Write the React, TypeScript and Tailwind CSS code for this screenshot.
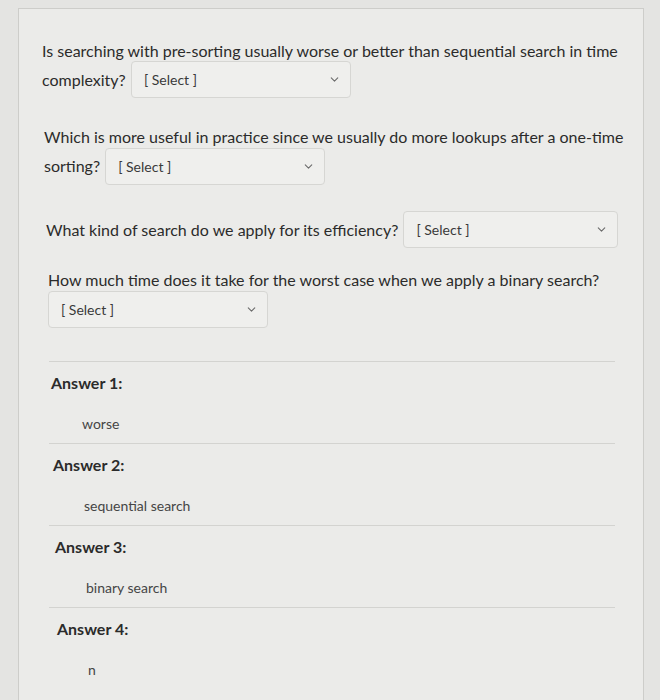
import { ChevronDown } from 'lucide-react';

type Question = {
  text: string;
  tail: string;
  gap: string;
};

const questions: Question[] = [
  {
    text: 'Is searching with pre-sorting usually worse or better than sequential search in time',
    tail: 'complexity?',
    gap: 'mt-0 pl-0',
  },
  {
    text: 'Which is more useful in practice since we usually do more lookups after a one-time',
    tail: 'sorting?',
    gap: 'mt-[28px] pl-[2px]',
  },
];

const answers = [
  { label: 'Answer 1:', value: 'worse' },
  { label: 'Answer 2:', value: 'sequential search' },
  { label: 'Answer 3:', value: 'binary search' },
  { label: 'Answer 4:', value: 'n' },
];

function SelectBox({ width = 'w-[220px]', className = '' }: { width?: string; className?: string }) {
  return (
    <span
      className={`inline-flex h-[37px] ${width} -mb-[4px] -mt-[8px] items-center justify-between rounded-[4px] border border-[#d6d6d3] bg-[#efefed] pl-[12px] pr-[9px] align-middle text-[14px] text-[#3a3a3a] ${className}`}
    >
      <span>[ Select ]</span>
      <ChevronDown size={13} strokeWidth={2} className="text-[#6b6b6b]" />
    </span>
  );
}

function App() {
  return (
    <div
      className="min-h-[700px] bg-[#e4e4e2] pl-[18px] pr-[16px] pt-2"
      style={{ fontFamily: 'Lato, "Open Sans", sans-serif' }}
    >
      <div className="h-[692px] border-x border-t border-[#cdcdca] bg-[#ebebe9] pl-[23px] pt-[27px] text-[16px] leading-[29px] text-[#2b2b2b]">
        {questions.map((q) => (
          <p key={q.tail} className={q.gap}>
            {q.text}
            <br />
            {q.tail} <SelectBox className="ml-[1px]" />
          </p>
        ))}

        <p className="mt-[34px] pl-[4px]">
          What kind of search do we apply for its efficiency?{' '}
          <SelectBox width="w-[215px]" className="ml-[1px]" />
        </p>

        <p className="mt-[21px] pl-[6px]">
          How much time does it take for the worst case when we apply a binary search?
          <br />
          <SelectBox />
        </p>

        <div className="ml-[7px] mr-[28px] mt-[37px] border-t border-[#d3d3d0]">
          {answers.map((a, i) => (
            <div
              key={a.label}
              className={`pb-[9px] pt-[11px] ${i < answers.length - 1 ? 'border-b border-[#d3d3d0]' : ''}`}
              style={{ paddingLeft: 2 + i * 2 }}
            >
              <div className="text-[16px] font-bold leading-[20px] text-[#2b2b2b]">{a.label}</div>
              <div className="mt-[21px] pl-[31px] text-[14px] leading-[20px] text-[#454545]">
                {a.value}
              </div>
            </div>
          ))}
        </div>
      </div>
    </div>
  );
}

export default App;
